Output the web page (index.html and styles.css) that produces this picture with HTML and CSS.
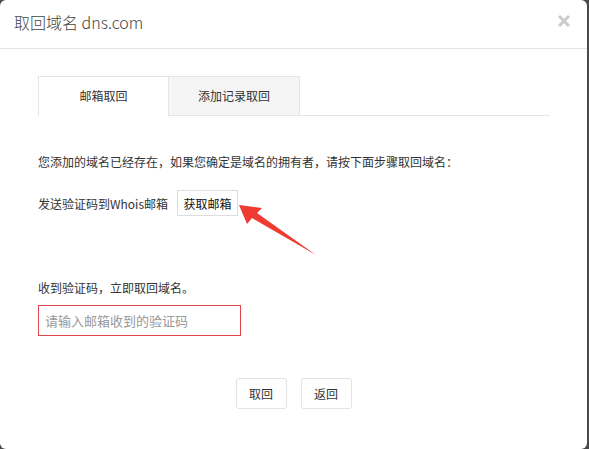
FILE: index.html
```html
<!DOCTYPE html>
<html lang="zh-CN">
<head>
    <meta charset="UTF-8">
    <title>取回域名</title>
    <link rel="stylesheet" href="styles.css">
</head>
<body>
    <div class="modal">
        <div class="modal-header">
            <span class="modal-title">取回域名 dns.com</span>
            <svg class="close" width="14" height="12" viewBox="0 0 14 12">
                <path d="M2 1 L12 11 M12 1 L2 11" stroke="#cbcbcb" stroke-width="3" stroke-linecap="butt"/>
            </svg>
        </div>

        <div class="modal-body">
            <div class="tabs">
                <div class="tab active">邮箱取回</div>
                <div class="tab">添加记录取回</div>
            </div>

            <p class="intro">您添加的域名已经存在，如果您确定是域名的拥有者，请按下面步骤取回域名：</p>

            <div class="send-row">
                <span>发送验证码到Whois邮箱</span>
                <button class="btn btn-get">获取邮箱</button>
            </div>

            <p class="label">收到验证码，立即取回域名。</p>
            <input class="code-input" type="text" placeholder="请输入邮箱收到的验证码">

            <div class="actions">
                <button class="btn btn-action">取回</button>
                <button class="btn btn-action">返回</button>
            </div>
        </div>

        <!-- red pointer next to the mail button -->
        <svg class="pointer" width="90" height="65" viewBox="0 0 90 65">
            <polygon points="9,10 32,13 27,18 86,60 22,23 17,29" fill="#f03b32"/>
        </svg>
    </div>
</body>
</html>
```

FILE: styles.css
```css
html, body {
    margin: 0;
    height: 100%;
    background-color: #4a4a4a;
}
body {
    font-family: "Noto Sans CJK SC", "Microsoft YaHei", sans-serif;
    font-size: 12px;
    color: #333;
}
.modal {
    position: relative;
    width: 587px;
    height: 449px;
    box-sizing: border-box;
    background-color: #fff;
    border-radius: 6px;
}
.modal-header {
    height: 48px;
    padding: 0 16px 0 14px;
    display: flex;
    align-items: center;
    justify-content: space-between;
    border-bottom: 1px solid #e5e5e5;
}
.modal-title {
    font-size: 16px;
    font-weight: 300;
    color: #444;
    margin-top: -4px;
}
.close {
    margin-top: -6px;
}
.modal-body {
    padding: 27px 37px 0 38px;
}
.tabs {
    display: flex;
    border-bottom: 1px solid #e5e5e5;
}
.tab {
    width: 131px;
    height: 39px;
    box-sizing: border-box;
    line-height: 38px;
    text-align: center;
    border: 1px solid #e5e5e5;
    border-bottom: none;
    background-color: #f5f5f5;
    color: #333;
}
.tab + .tab {
    border-left: none;
}
.tab.active {
    background-color: #fff;
    height: 40px;
    margin-bottom: -1px;
}
.intro {
    margin: 36px 0 0;
    line-height: 20px;
}
.send-row {
    display: flex;
    align-items: center;
    gap: 9px;
    margin-top: 18px;
}
.btn {
    font-family: inherit;
    font-size: 12px;
    color: #333;
    background-color: #fff;
    border: 1px solid #ddd;
    cursor: pointer;
    padding: 0;
}
.btn-get {
    width: 61px;
    height: 26px;
    color: #111;
}
.label {
    margin: 62px 0 0;
    line-height: 20px;
}
.code-input {
    display: block;
    margin-top: 7px;
    width: 203px;
    height: 31px;
    box-sizing: border-box;
    padding: 0 6px;
    border: 1px solid #e0474c;
    font-family: inherit;
    font-size: 13px;
    outline: none;
}
.code-input::placeholder {
    color: #999;
}
.actions {
    display: flex;
    justify-content: center;
    gap: 14px;
    margin: 42px -37px 0 -38px;
}
.btn-action {
    width: 51px;
    height: 31px;
    border-radius: 3px;
    border-color: #e3e3e3;
}
.pointer {
    position: absolute;
    left: 230px;
    top: 195px;
}
```
